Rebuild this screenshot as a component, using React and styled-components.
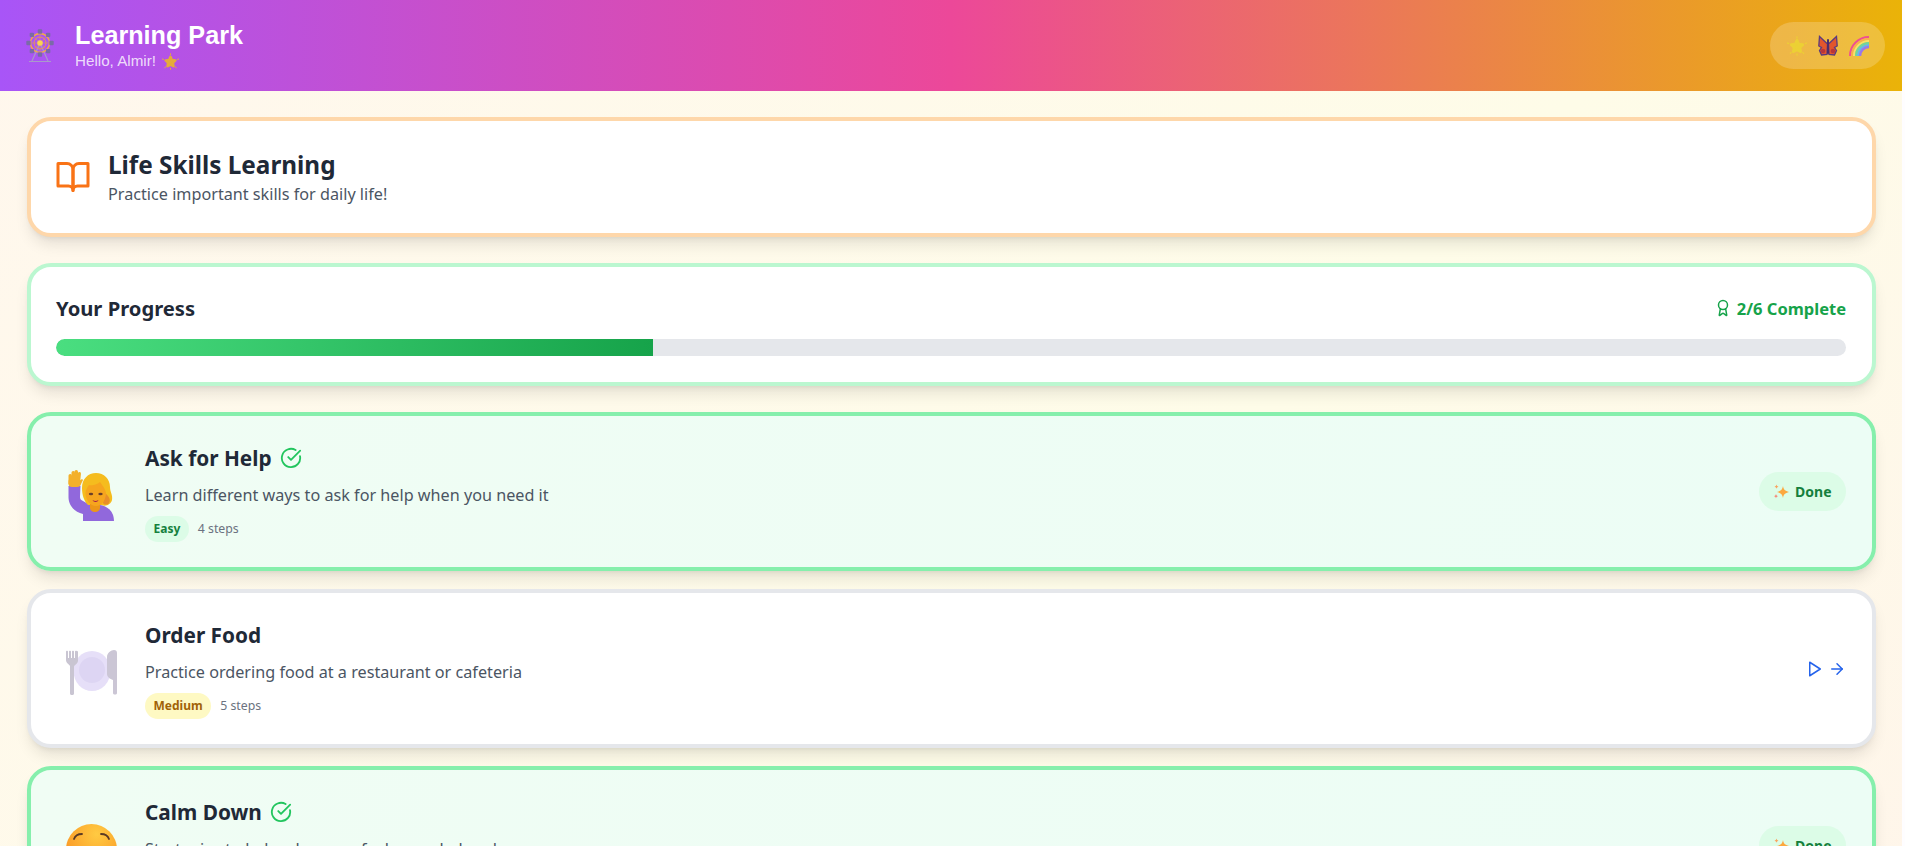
import React from "react";
import styled, { createGlobalStyle } from "styled-components";
import { Award, CircleCheckBig, ArrowRight } from "lucide-react";

const GlobalStyle = createGlobalStyle`
	html, body { margin: 0; padding: 0; height: 100%; overflow: hidden; background: #fefdff; }
	* { box-sizing: border-box; }
	body { font-family: "Noto Sans", "Open Sans", sans-serif; color: #1f2937; }
`;

const Page = styled.div`
	width: 1902px;
	height: 846px;
	overflow: hidden;
	background: linear-gradient(135deg, #fff7ed, #fefce8, #fff2eb);
	background-size: 100% 1450px;
	background-repeat: no-repeat;
`;
const Header = styled.header`
	height: 91px;
	padding: 0 17px 0 26px;
	display: flex;
	align-items: center;
	justify-content: space-between;
	background: linear-gradient(90deg, #a855f7, #ec4899, #eab308);
`;
const Brand = styled.div`
	display: flex;
	align-items: center;
	gap: 21px;
`;
const BrandTitle = styled.div`
	font-family: "Liberation Sans", sans-serif;
	font-size: 25.2px;
	line-height: 31px;
	font-weight: 700;
	color: white;
`;
const BrandSub = styled.div`
	font-family: "Liberation Sans", sans-serif;
	font-size: 15.2px;
	line-height: 20px;
	color: rgba(255, 255, 255, 0.8);
	display: flex;
	align-items: center;
	gap: 6px;
`;
const EmojiPill = styled.div`
	width: 115px;
	height: 47px;
	border-radius: 24px;
	background: rgba(255, 255, 255, 0.2);
	display: flex;
	align-items: center;
	justify-content: center;
	gap: 11px;
`;
const Main = styled.main`
	padding: 26px 26px 0 27px;
	display: flex;
	flex-direction: column;
`;
const Card = styled.section`
	border: 4px solid ${props => props.$border};
	background: ${props => props.$bg || "white"};
	border-radius: 24px;
	box-shadow: 0 10px 15px -3px rgba(0, 0, 0, 0.1), 0 4px 6px -4px rgba(0, 0, 0, 0.1);
`;
const IntroCard = styled(Card)`
	height: 120px;
	margin-bottom: 26px;
	padding: 0 24px;
	display: flex;
	align-items: center;
	gap: 17px;
`;
const IntroTitle = styled.h1`
	margin: 0;
	font-size: 24.3px;
	line-height: 32px;
	font-weight: 700;
	color: #1f2937;
`;
const IntroSub = styled.p`
	margin: 1px 0 0;
	font-size: 16.2px;
	line-height: 24px;
	color: #4b5563;
`;
const ProgressCard = styled(Card)`
	height: 123px;
	margin-bottom: 26px;
	padding: 27px 26px 0 25px;
`;
const ProgressHead = styled.div`
	display: flex;
	justify-content: space-between;
	align-items: center;
	height: 28px;
	margin-bottom: 17px;
`;
const ProgressTitle = styled.h2`
	margin: 0;
	font-size: 20.2px;
	font-weight: 700;
	color: #1f2937;
`;
const ProgressCount = styled.div`
	display: flex;
	align-items: center;
	gap: 5px;
	font-size: 16.5px;
	font-weight: 700;
	color: #16a34a;
`;
const Track = styled.div`
	height: 17px;
	border-radius: 9px;
	background: #e5e7eb;
	overflow: hidden;
`;
const Fill = styled.div`
	height: 100%;
	border-radius: 9px 0 0 9px;
	background: linear-gradient(90deg, #4ade80, #16a34a);
`;
const LessonCard = styled(Card)`
	height: 159px;
	margin-bottom: 18px;
	padding: 0 26px 0 25px;
	display: flex;
	align-items: center;
	gap: 19px;
`;
const LessonIcon = styled.div`
	width: 70px;
	padding-top: 7px;
	display: flex;
	justify-content: center;
`;
const LessonBody = styled.div`
	flex: 1;
	padding-top: 2px;
`;
const LessonTitleRow = styled.div`
	display: flex;
	align-items: center;
	gap: 8px;
`;
const LessonTitle = styled.h3`
	margin: 0;
	font-size: 20.8px;
	line-height: 28px;
	font-weight: 700;
	color: #1f2937;
`;
const LessonDesc = styled.p`
	margin: 11px 0 9px;
	font-size: 16.2px;
	line-height: 24px;
	color: #4b5563;
`;
const MetaRow = styled.div`
	display: flex;
	align-items: center;
	gap: 9px;
`;
const Level = styled.span`
	padding: 4px 8.5px;
	border-radius: 13px;
	font-size: 12px;
	line-height: 18px;
	font-weight: 700;
	background: ${props => props.$bg};
	color: ${props => props.$color};
`;
const Steps = styled.span`
	font-size: 12.3px;
	color: #6b7280;
`;
const DoneBadge = styled.div`
	display: flex;
	align-items: center;
	gap: 6px;
	height: 39px;
	padding: 0 14.5px;
	border-radius: 20px;
	background: #dcfce7;
	font-size: 14px;
	font-weight: 700;
	color: #15803d;
`;
const StartLink = styled.div`
	display: flex;
	align-items: center;
	gap: 4px;
	color: #2563eb;
`;

const BookIcon = () => (
	<svg width="36" height="36" viewBox="0 0 24 24" fill="none" stroke="#f97316" strokeWidth="2" strokeLinecap="round" strokeLinejoin="round">
		<path d="M2 3h6a4 4 0 0 1 4 4v14a3 3 0 0 0-3-3H2z" />
		<path d="M22 3h-6a4 4 0 0 0-4 4v14a3 3 0 0 1 3-3h7z" />
	</svg>
);
const PlayIcon = () => (
	<svg width="18" height="18" viewBox="0 0 24 24" fill="none" stroke="currentColor" strokeWidth="2" strokeLinejoin="round">
		<polygon points="5 3 19 12 5 21 5 3" />
	</svg>
);
const GlowStar = ({ size = 24, color = "#ecd034" }) => (
	<svg width={size} height={size} viewBox="0 0 24 24">
		<g stroke={color} strokeWidth="1.4" strokeLinecap="round">
			<path d="M12 1v1.500M22 9l1.500-.5M2 9L.5 8.500M19 19.500l1 1.500M5 19.500L4 21M12 21.500V23" />
		</g>
		<path d="M12 5.500l2 4.400 4.800.6-3.500 3.300.9 4.800-4.200-2.300-4.200 2.300.9-4.800-3.500-3.300 4.800-.6z" fill={color} stroke={color} strokeWidth="3.600" strokeLinejoin="round" />
	</svg>
);
const Ferris = () => (
	<svg width="28" height="34" viewBox="0 0 28 34" fill="none">
		<path d="M14 14L6 32M14 14l8 18M3 32.500h22" stroke="#a99ac9" strokeWidth="1.200" />
		<circle cx="14" cy="14" r="9.500" stroke="#f5b13a" strokeWidth="1.300" />
		<circle cx="14" cy="14" r="6" stroke="#ed9f45" strokeWidth="0.900" />
		<path d="M14 4.500v19M4.500 14h19M7.300 7.300l13.400 13.400M20.700 7.300L7.300 20.700" stroke="#e8a040" strokeWidth="0.500" />
		<circle cx="14" cy="14" r="2.800" fill="#fcd34d" />
		{[0, 45, 90, 135, 180, 225, 270, 315].map(a => {
			const r = (a * Math.PI) / 180;
			return <rect key={a} x={14 + 11.5 * Math.cos(r) - 2.2} y={14 + 11.5 * Math.sin(r) - 2.2} width="4.400" height="4.400" rx="1" fill="#7a6aa8" />;
		})}
	</svg>
);
const Butterfly = () => (
	<svg width="20" height="21" viewBox="0 0 20 21">
		<path d="M9.500 9L1.500 1.500.8 11l2.700 1.500-2 3 2 4.500 5.500-.5z" fill="#e2562c" stroke="#5b3a7e" strokeWidth="1.300" />
		<path d="M10.500 9l8-7.500.7 9.500-2.700 1.500 2 3-2 4.500-5.500-.5z" fill="#e2562c" stroke="#5b3a7e" strokeWidth="1.300" />
		<rect x="9" y="4" width="2" height="15" rx="1" fill="#4b2e6b" />
		<circle cx="5" cy="16" r="2.300" fill="#b8363a" />
		<circle cx="15" cy="16" r="2.300" fill="#b8363a" />
	</svg>
);
const Rainbow = () => (
	<svg width="20" height="20" viewBox="0 0 20 20" fill="none">
		<path d="M1 20A19 19 0 0 1 20 1" stroke="#ef4f91" strokeWidth="2" />
		<path d="M3 20A17 17 0 0 1 20 3" stroke="#f8b04b" strokeWidth="2" />
		<path d="M5 20A15 15 0 0 1 20 5" stroke="#f7e26b" strokeWidth="2" />
		<path d="M7 20A13 13 0 0 1 20 7" stroke="#6fd69a" strokeWidth="2" />
		<path d="M9 20A11 11 0 0 1 20 9" stroke="#62b8ee" strokeWidth="2" />
		<path d="M11 20A9 9 0 0 1 20 11" stroke="#9a78e8" strokeWidth="2.500" />
	</svg>
);
const HandWoman = () => (
	<svg width="48" height="52" viewBox="0 0 48 52">
		<path d="M1.500 17h12l-.5 11c0 2 1 3 3 4l7 4h10c8 1 14 7 14 16H16v-7C7 43 1.500 36 1.500 28z" fill="#9168dc" />
		<g fill="#f3b02a">
			<rect x="1.500" y="5" width="3.500" height="11" rx="1.700" />
			<rect x="4.500" y="2" width="3.500" height="12" rx="1.700" />
			<rect x="7.500" y="1" width="3.500" height="12" rx="1.700" />
			<rect x="10.500" y="3" width="3" height="12" rx="1.500" transform="rotate(6 12 9)" />
			<rect x="1.500" y="9" width="12" height="9" rx="3.500" />
			<path d="M12 12l3-2 1 1-3 6z" />
		</g>
		<path d="M15 19c0-9 6-15 14-15s14 6 14 14c0 5 3 8 2 13-1 4-6 7-10 5H21c-4-4-6-10-6-17z" fill="#f5bc1e" />
		<path d="M38 24c4 3 6 7 4 10-1 2-5 2-6 0z" fill="#e88e2a" />
		<path d="M23 35h10v4c0 2-2 4-5 4s-5-2-5-4z" fill="#ec9618" />
		<path d="M18.500 24c0-3 2-6 3.500-8 3 1 9-1 11-3 2 3 5 6 6 11 0 7-4.500 13-10 13S18.500 31 18.500 24z" fill="#f6a51e" />
		<ellipse cx="24" cy="25" rx="2.200" ry="1.300" fill="#6b3f2a" />
		<ellipse cx="33.500" cy="25" rx="2.200" ry="1.300" fill="#6b3f2a" />
		<path d="M25.500 31c2 1.200 4 1.200 6 0-.8 2.500-5 2.500-6 0z" fill="#a3174a" />
	</svg>
);
const Plate = () => (
	<svg width="52" height="45" viewBox="0 0 52 45">
		<ellipse cx="27" cy="21" rx="18.500" ry="20" fill="#e6dff8" />
		<circle cx="27" cy="20" r="13" fill="#ddd5f3" />
		<path d="M1 1.500C1 .5 3 .5 3 1.500V8h1V1.500c0-1 2-1 2 0V8h1V1.500c0-1 2-1 2 0V8h1V1.500c0-1 2-1 3 0v9c0 3-3 4-4 6v27c0 2-4 2-4 0V16c-1-2-4-3-4-6z" fill="#c9c5d2" />
		<path d="M42 7c0-4 4-7 7-7 2 0 3 1 3 3v40c0 2-4 2-4 0V30c-3-1-6-3-6-6z" fill="#cbc6d5" />
	</svg>
);
const Relieved = () => (
	<svg width="51" height="51" viewBox="0 0 51 51">
		<defs>
			<radialGradient id="face" cx="0.6" cy="0.2" r="0.85">
				<stop offset="0" stopColor="#ffca42" />
				<stop offset="0.7" stopColor="#fba02a" />
				<stop offset="1" stopColor="#f1711f" />
			</radialGradient>
		</defs>
		<circle cx="25.500" cy="25.500" r="25.500" fill="url(#face)" />
		<path d="M8 15c1-3 4-5 8-5M43 15c-1-3-4-5-8-5" stroke="#5b3a24" strokeWidth="1.800" fill="none" strokeLinecap="round" />
		<path d="M9 25c2 2 6 2 8 0M34 25c2 2 6 2 8 0M18 36c4 3 11 3 15 0" stroke="#5b3a24" strokeWidth="1.800" fill="none" strokeLinecap="round" />
	</svg>
);
const Sparkles = () => (
	<svg width="16" height="16" viewBox="0 0 16 16">
		<path d="M10 2c.6 3.400 2 5 6 6-4 1-5.400 2.600-6 6-.6-3.400-2-5-6-6 4-1 5.400-2.600 6-6z" fill="#fca83e" />
		<path d="M3.500 .5c.3 1.300.8 1.800 2 2.200-1.200.3-1.700.8-2 2-.3-1.200-.8-1.700-2-2 1.200-.4 1.700-.9 2-2.200z" fill="#f9a35d" />
		<path d="M3 10c.3 1.300.8 1.800 2 2.200-1.200.3-1.700.8-2 2-.3-1.200-.8-1.700-2-2 1.200-.4 1.700-.9 2-2.200z" fill="#f58a78" />
	</svg>
);

const levels = {
	Easy: { bg: "#dcfce7", color: "#15803d" },
	Medium: { bg: "#fef9c3", color: "#a16207" },
};
const lessons = [
	{ title: "Ask for Help", desc: "Learn different ways to ask for help when you need it", level: "Easy", steps: 4, done: true, icon: <HandWoman /> },
	{ title: "Order Food", desc: "Practice ordering food at a restaurant or cafeteria", level: "Medium", steps: 5, done: false, icon: <Plate /> },
	{ title: "Calm Down", desc: "Strategies to help when you feel overwhelmed", level: "Easy", steps: 4, done: true, icon: <Relieved /> },
];

const App = () => (
	<Page>
		<GlobalStyle />
		<Header>
			<Brand>
				<Ferris />
				<div>
					<BrandTitle>Learning Park</BrandTitle>
					<BrandSub>Hello, Almir! <GlowStar size={17} color="#e5ab3b" /></BrandSub>
				</div>
			</Brand>
			<EmojiPill>
				<GlowStar size={20} />
				<Butterfly />
				<Rainbow />
			</EmojiPill>
		</Header>
		<Main>
			<IntroCard $border="#fed7aa">
				<BookIcon />
				<div>
					<IntroTitle>Life Skills Learning</IntroTitle>
					<IntroSub>Practice important skills for daily life!</IntroSub>
				</div>
			</IntroCard>
			<ProgressCard $border="#bbf7d0">
				<ProgressHead>
					<ProgressTitle>Your Progress</ProgressTitle>
					<ProgressCount><Award size={18} />2/6 Complete</ProgressCount>
				</ProgressHead>
				<Track><Fill style={{ width: `${(2 / 6) * 100}%` }} /></Track>
			</ProgressCard>
			{lessons.map(lesson => (
				<LessonCard key={lesson.title} $border={lesson.done ? "#86efac" : "#e5e7eb"} $bg={lesson.done ? "linear-gradient(90deg, #f0fdf4, #ecfdf5)" : "white"}>
					<LessonIcon>{lesson.icon}</LessonIcon>
					<LessonBody>
						<LessonTitleRow>
							<LessonTitle>{lesson.title}</LessonTitle>
							{lesson.done && <CircleCheckBig size={22} color="#22c55e" />}
						</LessonTitleRow>
						<LessonDesc>{lesson.desc}</LessonDesc>
						<MetaRow>
							<Level $bg={levels[lesson.level].bg} $color={levels[lesson.level].color}>{lesson.level}</Level>
							<Steps>{lesson.steps} steps</Steps>
						</MetaRow>
					</LessonBody>
					{lesson.done ? (
						<DoneBadge><Sparkles />Done</DoneBadge>
					) : (
						<StartLink><PlayIcon /><ArrowRight size={18} /></StartLink>
					)}
				</LessonCard>
			))}
		</Main>
	</Page>
);

export default App;
